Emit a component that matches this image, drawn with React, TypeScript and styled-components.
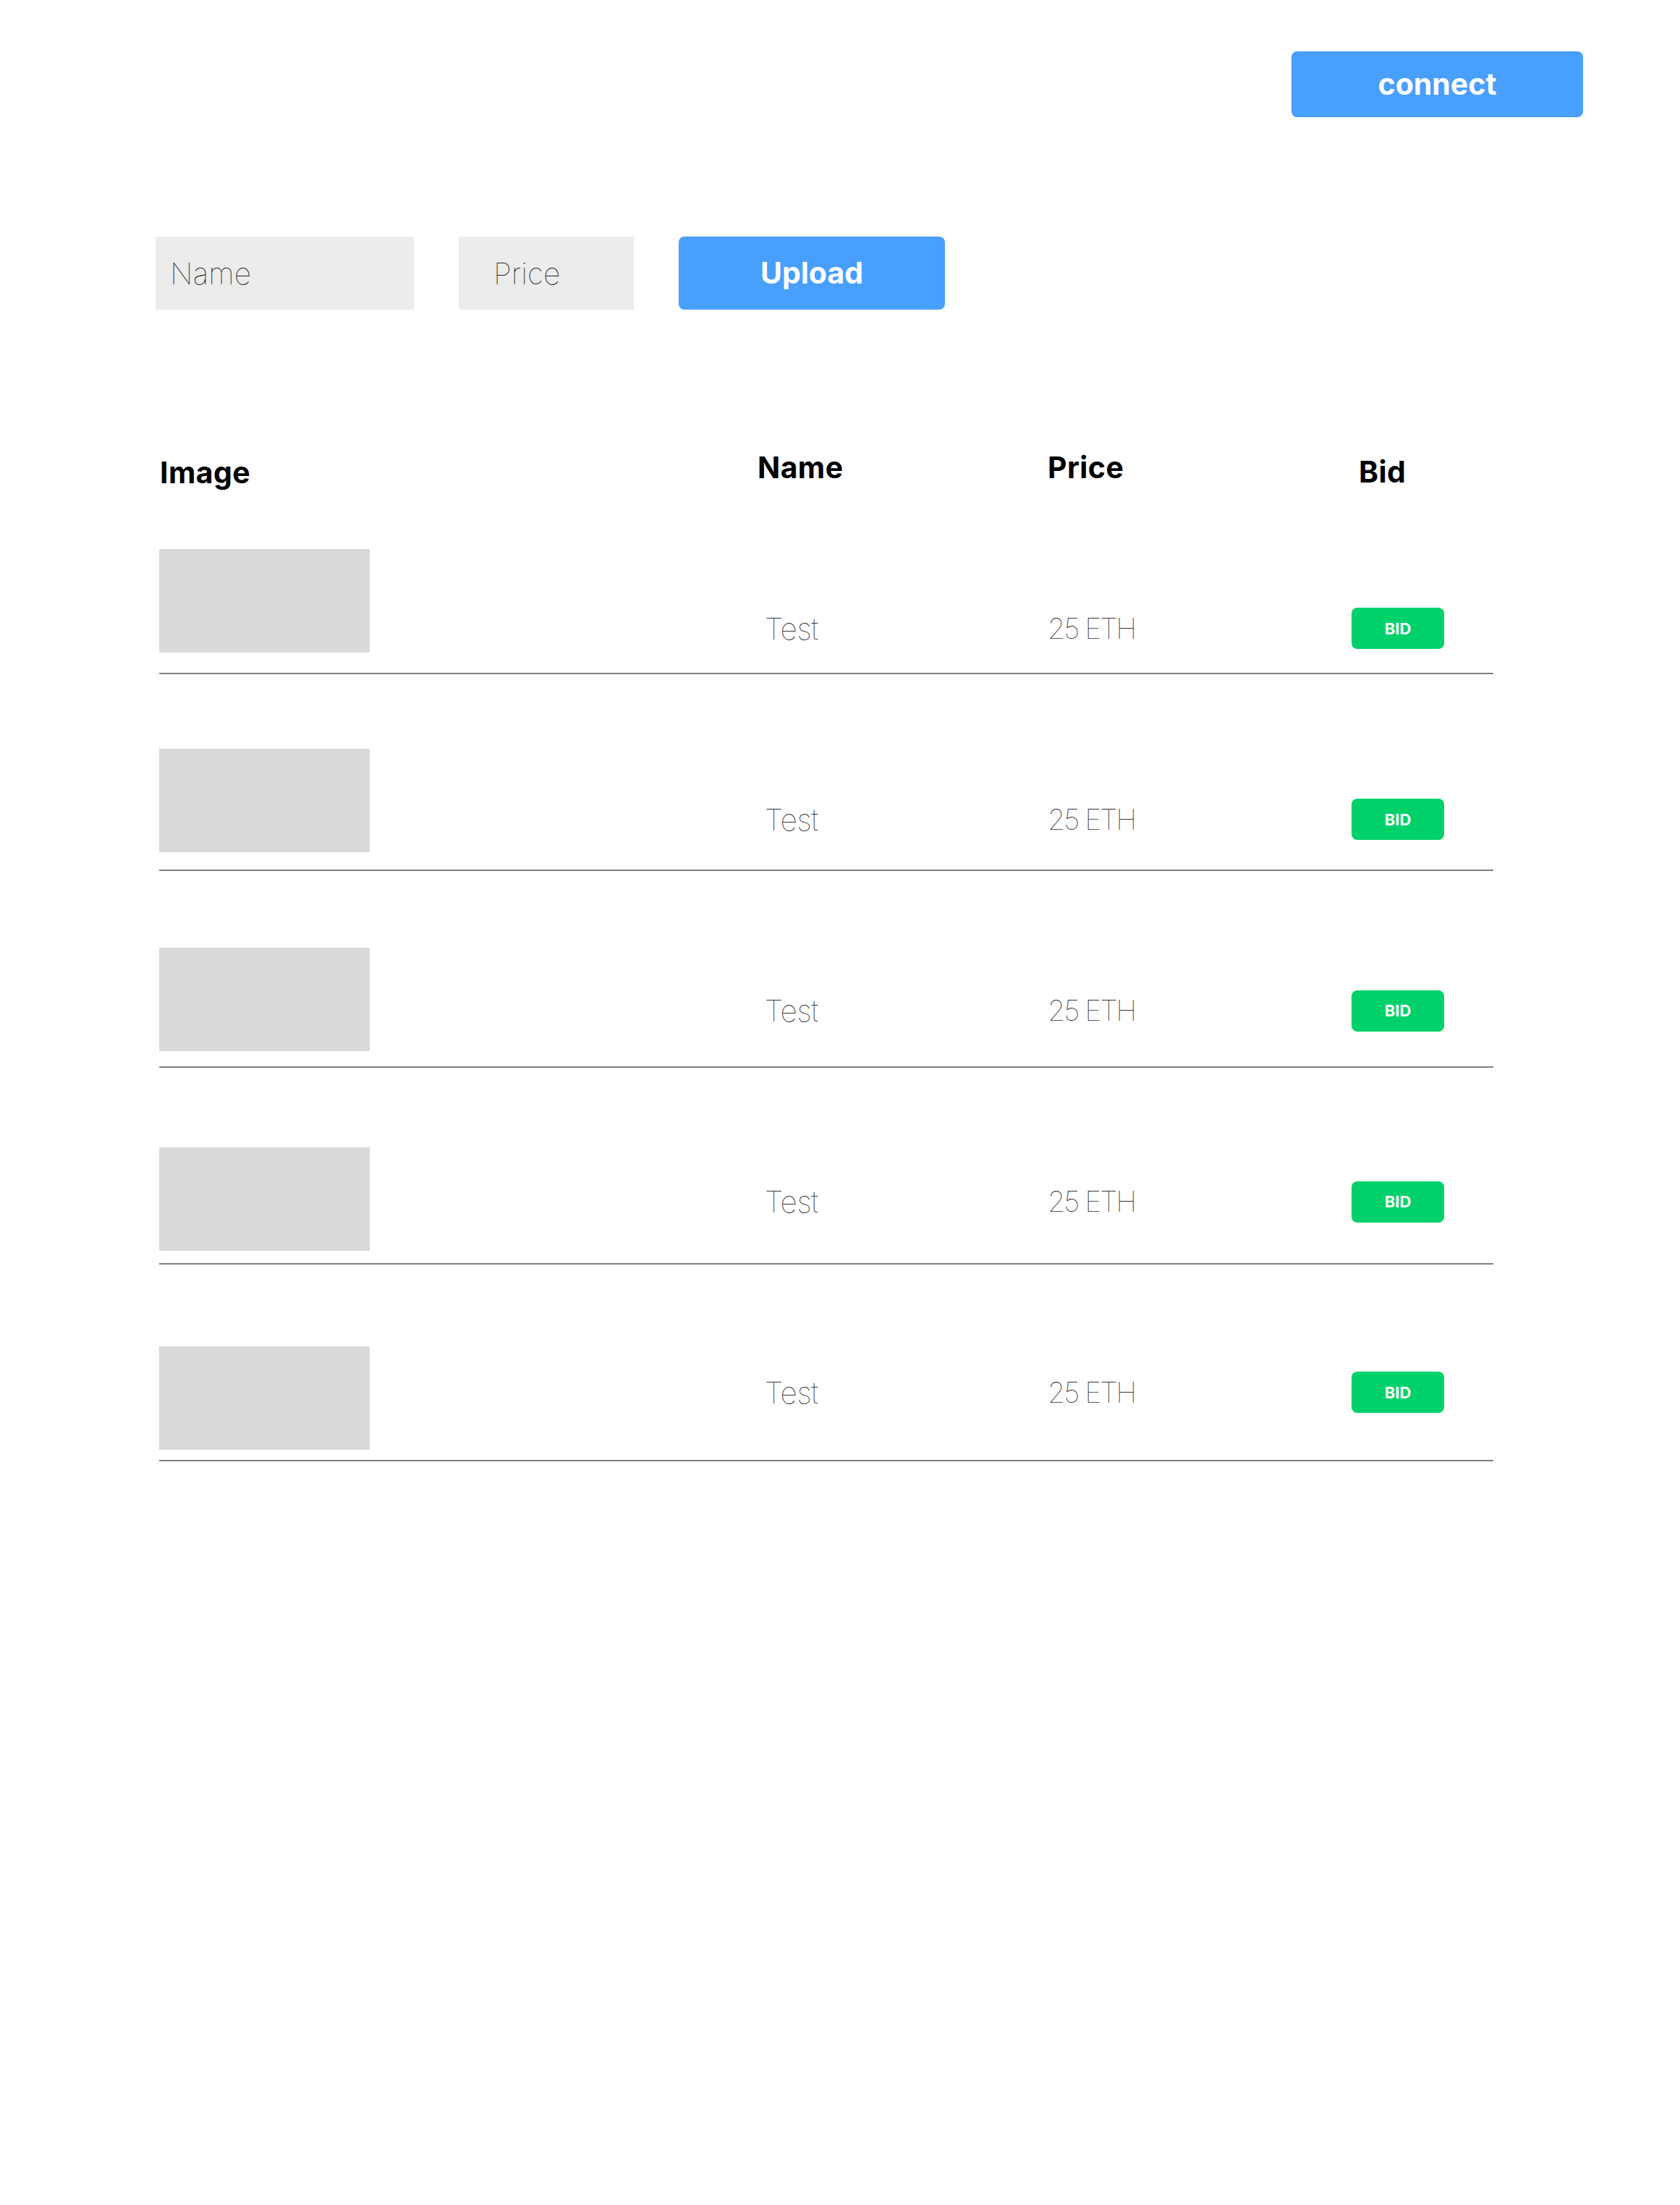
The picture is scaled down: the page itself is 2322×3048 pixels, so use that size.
import React from "react";
import styled, { createGlobalStyle } from "styled-components";

const GlobalStyle = createGlobalStyle`
  html, body {
    margin: 0;
    padding: 0;
    background: #ffffff;
  }
  body {
    font-family: Inter, "Noto Sans", sans-serif;
  }
  * {
    box-sizing: border-box;
  }
`;

const Page = styled.div`
  width: 2322px;
  min-height: 3048px;
  background: #ffffff;
  display: flex;
  flex-direction: column;
`;

const TopBar = styled.header`
  display: flex;
  justify-content: flex-end;
  padding: 71px 134px 0 0;
`;

const PrimaryButton = styled.button<{ $w: number; $h: number }>`
  width: ${(p) => p.$w}px;
  height: ${(p) => p.$h}px;
  border: none;
  border-radius: 8px;
  background: #489ffe;
  color: #ffffff;
  font-family: Inter, "Noto Sans", sans-serif;
  font-weight: 700;
  font-size: 41px;
  line-height: 1;
  padding: 0;
  cursor: pointer;
`;

const UploadForm = styled.div`
  display: flex;
  gap: 62px;
  padding: 165px 0 0 215px;
`;

const TextField = styled.input<{ $w: number; $indent: number }>`
  width: ${(p) => p.$w}px;
  height: 101px;
  border: none;
  outline: none;
  background: #ececec;
  padding: 0 0 0 ${(p) => p.$indent}px;
  font-family: Inter, "Noto Sans", sans-serif;
  font-weight: 100;
  font-size: 41px;
  color: #222222;
  &::placeholder {
    color: #222222;
    opacity: 1;
  }
`;

const Table = styled.section`
  margin: 172px 0 0 220px;
  width: 1844px;
  display: flex;
  flex-direction: column;
`;

const columns = "827px 401px 420px 196px";

const HeaderRow = styled.div`
  display: grid;
  grid-template-columns: ${columns};
  height: 100px;
  align-items: start;
`;

const HeaderCell = styled.div<{ $drop: number; $indent: number }>`
  padding-top: ${(p) => p.$drop}px;
  padding-left: ${(p) => p.$indent}px;
  font-family: Inter, "Noto Sans", sans-serif;
  font-weight: 700;
  font-size: 41px;
  line-height: 1;
  color: #000000;
  letter-spacing: 0.4px;
`;

const Row = styled.div<{ $h: number }>`
  display: grid;
  grid-template-columns: ${columns};
  align-items: start;
  height: ${(p) => p.$h}px;
  border-bottom: 2px solid #7f7f7f;
`;

const Thumb = styled.div<{ $top: number }>`
  margin-top: ${(p) => p.$top}px;
  width: 291px;
  height: 143px;
  background: #d9d9d9;
`;

const ValueCell = styled.div<{ $top: number; $indent: number; $size: number; $tracking: number }>`
  margin-top: ${(p) => p.$top}px;
  padding-left: ${(p) => p.$indent}px;
  height: 57px;
  display: flex;
  align-items: center;
  font-family: Inter, "Noto Sans", sans-serif;
  font-weight: 100;
  font-size: ${(p) => p.$size}px;
  letter-spacing: ${(p) => p.$tracking}px;
  color: #333333;
  white-space: pre;
`;

const BidButton = styled.button<{ $top: number }>`
  margin-top: ${(p) => p.$top}px;
  width: 128px;
  height: 57px;
  border: none;
  border-radius: 8px;
  background: #00d16b;
  color: #ffffff;
  font-family: Inter, "Noto Sans", sans-serif;
  font-weight: 700;
  font-size: 22px;
  padding: 0;
  cursor: pointer;
`;

type Item = { name: string; price: string; h: number; img: number; ctl: number };

const items: Item[] = [
  { name: "Test", price: "25 ETH", h: 232, img: 59, ctl: 140 },
  { name: "Test", price: "25 ETH", h: 272, img: 102.6, ctl: 172.3 },
  { name: "Test", price: "25 ETH", h: 272, img: 106.2, ctl: 164.6 },
  { name: "Test", price: "25 ETH", h: 272, img: 109.8, ctl: 156.9 },
  { name: "Test", price: "25 ETH", h: 272, img: 113.4, ctl: 148.2 },
];

export default function App() {
  return (
    <>
      <GlobalStyle />
      <Page>
        <TopBar>
          <PrimaryButton $w={403} $h={91}>connect</PrimaryButton>
        </TopBar>
        <UploadForm>
          <TextField $w={357} $indent={20} placeholder="Name" />
          <TextField $w={242} $indent={48} placeholder="Price" />
          <PrimaryButton $w={368} $h={101}>Upload</PrimaryButton>
        </UploadForm>
        <Table>
          <HeaderRow>
            <HeaderCell $drop={33} $indent={1}>Image</HeaderCell>
            <HeaderCell $drop={26} $indent={0}>Name</HeaderCell>
            <HeaderCell $drop={26} $indent={0}>Price</HeaderCell>
            <HeaderCell $drop={32} $indent={10}>Bid</HeaderCell>
          </HeaderRow>
          {items.map((it, i) => (
            <Row key={i} $h={it.h}>
              <Thumb $top={it.img} />
              <ValueCell $top={it.ctl} $indent={10} $size={41} $tracking={-0.5}>{it.name}</ValueCell>
              <ValueCell $top={it.ctl} $indent={0} $size={39.5} $tracking={-2.2}>{it.price}</ValueCell>
              <BidButton $top={it.ctl}>BID</BidButton>
            </Row>
          ))}
        </Table>
      </Page>
    </>
  );
}
